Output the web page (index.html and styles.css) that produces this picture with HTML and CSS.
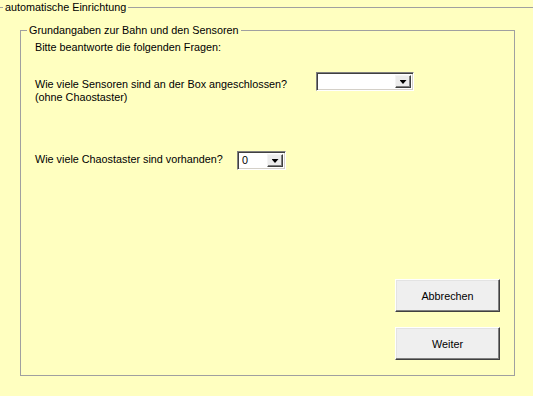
FILE: index.html
```html
<!DOCTYPE html>
<html>
<head>
  <title>automatische Einrichtung</title>
  <link rel="stylesheet" href="styles.css">
</head>
<body>
  <fieldset class="outer">
    <legend>automatische Einrichtung</legend>

    <fieldset class="inner">
      <legend>Grundangaben zur Bahn und den Sensoren</legend>

      <div class="inner-body">
        <p class="intro">Bitte beantworte die folgenden Fragen:</p>

        <div class="row row-sensors">
          <label class="question">Wie viele Sensoren sind an der Box angeschlossen?<br>(ohne Chaostaster)</label>
          <div class="combo combo-wide">
            <span class="combo-value"></span>
            <span class="combo-btn"><span class="arrow"></span></span>
          </div>
        </div>

        <div class="row row-chaos">
          <label class="question">Wie viele Chaostaster sind vorhanden?</label>
          <div class="combo combo-small">
            <span class="combo-value">0</span>
            <span class="combo-btn"><span class="arrow"></span></span>
          </div>
        </div>

        <div class="actions">
          <button class="btn">Abbrechen</button>
          <button class="btn">Weiter</button>
        </div>
      </div>
    </fieldset>
  </fieldset>
</body>
</html>
```

FILE: styles.css
```css
body {
  margin: 0;
  background-color: #ffffc0;
  font-family: "Liberation Sans", Arial, sans-serif;
  font-size: 10.8px;
  color: #000;
  height: 396px;
  overflow: hidden;
}

/* group boxes */
.outer {
  margin: 0;
  padding: 10px 0 0 0;
  border: 0;
  border-top: 1px solid #a0a0a0;
  min-width: 0;
}

.outer > legend {
  margin-left: 3px;
  padding: 0 2px;
  line-height: 14px;
}

.inner {
  box-sizing: border-box;
  margin: 0 0 0 20px;
  width: 495px;
  height: 352px;
  padding: 0;
  border: 1px solid #a0a0a0;
  min-width: 0;
}

.inner > legend {
  margin-left: 6px;
  padding: 0 2px;
  line-height: 13px;
}

.inner-body {
  padding: 0 14px;
}

.intro {
  margin: 4px 0 0 0;
  line-height: 13px;
}

/* question rows */
.row {
  display: flex;
  align-items: flex-start;
  line-height: 13px;
}

.row-sensors {
  margin-top: 18px;
}

.row-sensors .question {
  width: 281px;
  padding-top: 6px;
}

.row-chaos {
  margin-top: 47px;
}

.row-chaos .question {
  width: 202px;
  padding-top: 2px;
}

/* combo boxes */
.combo {
  box-sizing: border-box;
  height: 19px;
  display: flex;
  align-items: stretch;
  background: #fff;
  border: 1px solid;
  border-color: #808080 #fff #fff #808080;
  box-shadow: inset 1px 1px 0 #404040, inset -1px -1px 0 #d4d0c8;
  padding: 2px;
}

.combo-wide {
  width: 98px;
}

.combo-small {
  width: 49px;
}

.combo-value {
  flex: 1;
  padding-left: 2px;
  line-height: 13px;
}

.combo-btn {
  box-sizing: border-box;
  width: 16px;
  display: flex;
  align-items: center;
  justify-content: center;
  background: #ececec;
  border: 1px solid;
  border-color: #f4f4f4 #404040 #404040 #f4f4f4;
  box-shadow: inset -1px -1px 0 #808080;
}

.arrow {
  width: 7px;
  height: 4px;
  background: #000;
  clip-path: polygon(0 0, 100% 0, 50% 100%);
  margin-top: 1px;
}

/* buttons */
.actions {
  margin-top: 109px;
  display: flex;
  flex-direction: column;
  align-items: flex-end;
  gap: 15px;
}

.btn {
  box-sizing: border-box;
  width: 105px;
  height: 33px;
  font-family: "Liberation Sans", Arial, sans-serif;
  font-size: 10.8px;
  color: #000;
  background: #efefef;
  border: 1px solid;
  border-color: #fff #404040 #404040 #fff;
  box-shadow: inset -1px -1px 0 #808080, inset 1px 1px 0 #e3e3e3;
  padding: 0;
}
```
